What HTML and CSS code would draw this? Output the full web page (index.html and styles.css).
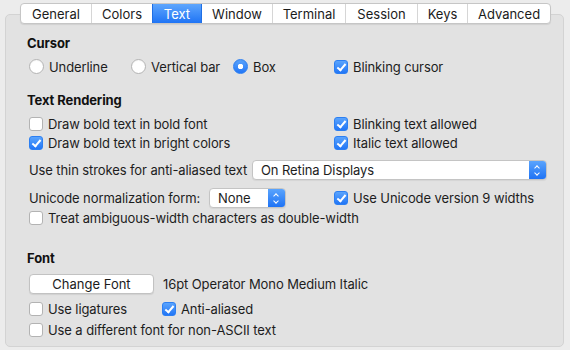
FILE: index.html
```html
<!DOCTYPE html>
<html lang="en">
<head>
  <meta charset="UTF-8" />
  <title>Preferences - Text</title>
  <link rel="stylesheet" href="styles.css">
</head>
<body>
  <div class="window">
    <div class="tabs">
      <span class="tab t-general">General</span>
      <span class="tab t-colors">Colors</span>
      <span class="tab t-text active">Text</span>
      <span class="tab t-window">Window</span>
      <span class="tab t-terminal">Terminal</span>
      <span class="tab t-session">Session</span>
      <span class="tab t-keys">Keys</span>
      <span class="tab t-advanced">Advanced</span>
    </div>

    <div class="panel">
      <h3 class="head h-cursor">Cursor</h3>
      <div class="radios">
        <label class="opt"><span class="radio"></span>Underline</label>
        <label class="opt"><span class="radio"></span>Vertical bar</label>
        <label class="opt"><span class="radio on"></span>Box</label>
        <label class="opt"><span class="check on"></span>Blinking cursor</label>
      </div>

      <h3 class="head h-render">Text Rendering</h3>
      <div class="grid">
        <label class="opt"><span class="check"></span>Draw bold text in bold font</label>
        <label class="opt"><span class="check on"></span>Blinking text allowed</label>
        <label class="opt"><span class="check on"></span>Draw bold text in bright colors</label>
        <label class="opt"><span class="check on"></span>Italic text allowed</label>
      </div>

      <div class="row r-thin">
        <span class="lbl">Use thin strokes for anti-aliased text</span>
        <div class="popup wide">
          <span class="val">On Retina Displays</span>
          <span class="arrows"></span>
        </div>
      </div>

      <div class="row r-norm">
        <span class="lbl">Unicode normalization form:</span>
        <div class="popup narrow">
          <span class="val">None</span>
          <span class="arrows"></span>
        </div>
        <label class="opt u9"><span class="check on"></span>Use Unicode version 9 widths</label>
      </div>
      <label class="opt line"><span class="check"></span>Treat ambiguous-width characters as double-width</label>

      <h3 class="head h-font">Font</h3>
      <div class="row r-font">
        <button class="btn">Change Font</button>
        <span class="fontname">16pt Operator Mono Medium Italic</span>
      </div>
      <div class="row r-lig">
        <label class="opt lig"><span class="check"></span>Use ligatures</label>
        <label class="opt"><span class="check on"></span>Anti-aliased</label>
      </div>
      <label class="opt line last"><span class="check"></span>Use a different font for non-ASCII text</label>
    </div>
  </div>
</body>
</html>
```

FILE: styles.css
```css
* {
  box-sizing: border-box;
}

body {
  margin: 0;
  background: #ececec;
  font-family: Inter, "Noto Sans", sans-serif;
  font-size: 13px;
  color: #1d1d1d;
}

.window {
  width: 570px;
  height: 350px;
  padding: 3px 6px 0 5px;
}

.tabs {
  position: relative;
  z-index: 1;
  display: flex;
  width: 531px;
  height: 21px;
  margin-left: 15px;
  background: #fff;
  border: 1px solid #c6c6c6;
  border-radius: 4px;
  overflow: hidden;
  box-shadow: 0 1px 1px rgba(0, 0, 0, 0.08);
}

.tab {
  display: flex;
  align-items: center;
  justify-content: center;
  height: 100%;
  border-left: 1px solid #d6d6d6;
  color: #1b1b1b;
}

.tab:first-child {
  border-left: none;
}

.t-general { width: 70px; }
.t-colors { width: 61px; }
.t-text { width: 49px; }
.t-window { width: 71px; }
.t-terminal { width: 73px; }
.t-session { width: 72px; }
.t-keys { width: 50px; }
.t-advanced { flex: 1; }

.tab.active {
  background: linear-gradient(#5ea6fd, #1f74f5);
  color: #fff;
  border-left-color: #1f6fe5;
}

.tab.active + .tab {
  border-left-color: #1f6fe5;
}

.panel {
  height: 333px;
  margin-top: -10px;
  padding: 20px 0 0 21px;
  background: #e2e2e2;
  border: 1px solid #d3d3d3;
  border-radius: 5px;
  letter-spacing: -0.1px;
}

.head {
  margin: 0;
  height: 16px;
  line-height: 16px;
  font-size: 13px;
  font-weight: 700;
  color: #111;
}

.h-render {
  margin-top: 16px;
}

.h-font {
  margin-top: 23px;
}

.opt {
  display: flex;
  align-items: center;
  height: 19px;
  white-space: nowrap;
}

.radios {
  display: grid;
  grid-template-columns: 102px 102px 101px auto;
  margin: 6px 0 0 2px;
}

.grid {
  display: grid;
  grid-template-columns: 305px auto;
  margin: 6px 0 0 2px;
}

.radio {
  width: 15px;
  height: 15px;
  margin-right: 5px;
  border-radius: 50%;
  background: #fff;
  border: 1px solid #b3b3b3;
  box-shadow: inset 0 1px 1px rgba(0, 0, 0, 0.04);
}

.radio.on {
  border-color: #2c7ff2;
  background: radial-gradient(circle, #fff 0 2.5px, transparent 3px), linear-gradient(#5aa4fd, #2276f6);
}

.check {
  width: 14px;
  height: 14px;
  margin-right: 5px;
  border-radius: 3px;
  background: #fff;
  border: 1px solid #b3b3b3;
}

.check.on {
  border-color: #2c7ff2;
  background: linear-gradient(#5aa4fd, #2276f6);
  position: relative;
}

.check.on::after {
  content: "";
  position: absolute;
  left: 4px;
  top: 1px;
  width: 3px;
  height: 7px;
  border: solid #fff;
  border-width: 0 2px 2px 0;
  transform: rotate(40deg);
}

.row {
  display: flex;
  align-items: center;
  margin-left: 2px;
}

.r-thin {
  height: 20px;
  margin-top: 8px;
}

.r-norm {
  height: 20px;
  margin-top: 8px;
}

.r-thin .lbl {
  width: 223px;
}

.r-norm .lbl {
  width: 180px;
}

.popup {
  display: flex;
  height: 20px;
  background: #fff;
  border: 1px solid #c4c4c4;
  border-radius: 4px;
  overflow: hidden;
  box-shadow: 0 1px 1px rgba(0, 0, 0, 0.06);
}

.popup.wide {
  width: 295px;
}

.popup.narrow {
  width: 77px;
}

.val {
  flex: 1;
  padding-left: 8px;
  line-height: 18px;
}

.arrows {
  width: 17px;
  background: linear-gradient(#5aa4fd, #1f73f5);
  position: relative;
}

.arrows::before,
.arrows::after {
  content: "";
  position: absolute;
  left: 6px;
  width: 3px;
  height: 3px;
  border: solid #fff;
  border-width: 1.5px 0 0 1.5px;
}

.arrows::before {
  top: 5px;
  transform: rotate(45deg);
}

.arrows::after {
  top: 10px;
  transform: rotate(225deg);
}

.u9 {
  margin-left: 48px;
}

.line {
  margin-left: 2px;
}

.last {
  margin-top: 2px;
}

.r-font {
  height: 20px;
  margin-top: 8px;
}

.btn {
  width: 125px;
  height: 20px;
  margin-right: 9px;
  padding: 0;
  font: inherit;
  color: #1b1b1b;
  background: #fff;
  border: 1px solid #c2c2c2;
  border-radius: 4px;
  box-shadow: 0 1px 1px rgba(0, 0, 0, 0.08);
}

.r-lig {
  margin-top: 5px;
}

.lig {
  width: 133px;
}
```
